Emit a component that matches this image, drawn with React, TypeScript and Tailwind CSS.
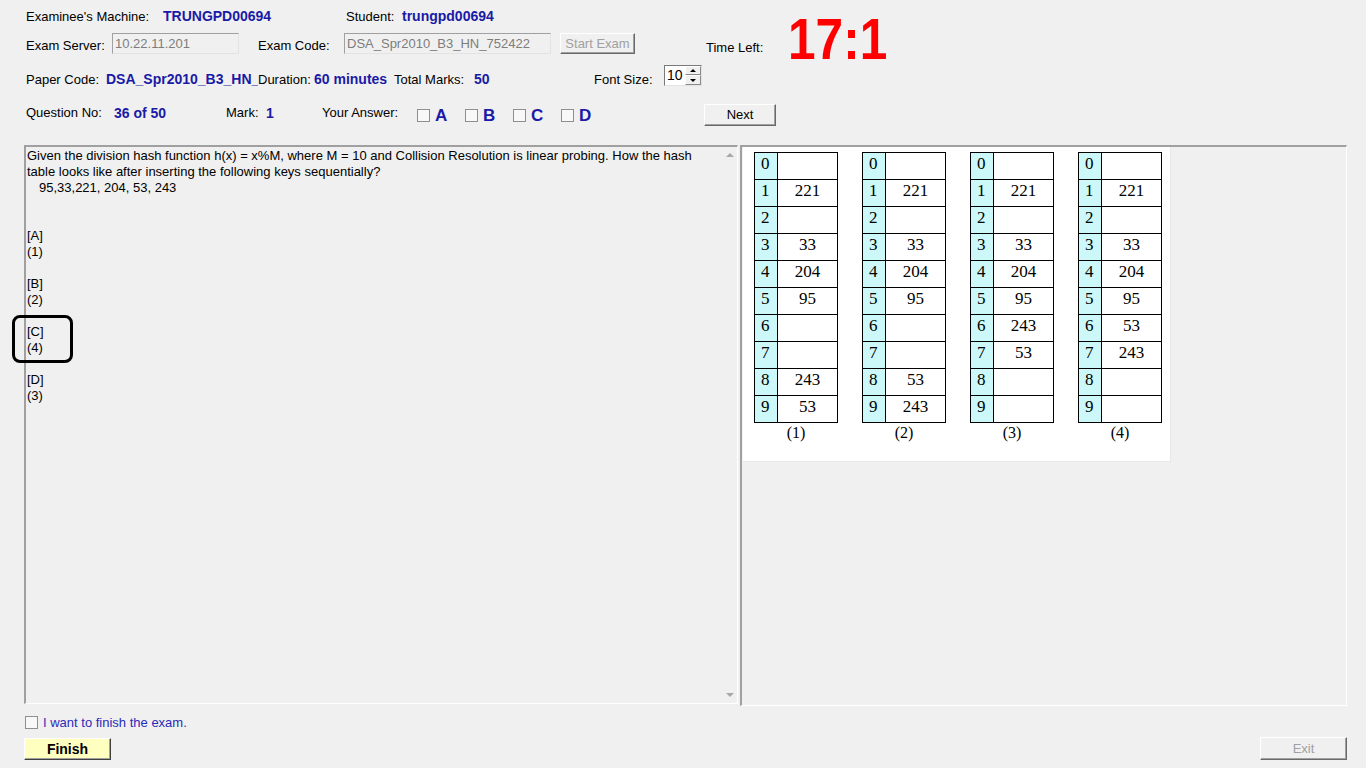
import React from "react";

const sans = "font-['Liberation_Sans',Arial,sans-serif]";
const serif = "font-['Liberation_Serif','Times_New_Roman',serif]";

const tables: { label: string; vals: string[] }[] = [
  { label: "(1)", vals: ["", "221", "", "33", "204", "95", "", "", "243", "53"] },
  { label: "(2)", vals: ["", "221", "", "33", "204", "95", "", "", "53", "243"] },
  { label: "(3)", vals: ["", "221", "", "33", "204", "95", "243", "53", "", ""] },
  { label: "(4)", vals: ["", "221", "", "33", "204", "95", "53", "243", "", ""] },
];

function HashTable({ label, vals }: { label: string; vals: string[] }) {
  return (
    <div className="flex w-[84px] shrink-0 flex-col items-center">
      <div className="w-[84px] border border-black bg-white">
        {vals.map((v, i) => (
          <div
            key={i}
            className={i < 9 ? "flex h-[27px] border-b border-black" : "flex h-[26px]"}
          >
            <div className="w-[23px] shrink-0 border-r border-black bg-[#ccf8fa] pl-[6px] text-[17px] leading-[21px] text-black">
              {i}
            </div>
            <div className="flex-1 text-center text-[17px] leading-[21px] text-black">{v}</div>
          </div>
        ))}
      </div>
      <div className="text-[16px] leading-[20px] text-black">{label}</div>
    </div>
  );
}

function Box() {
  return <span className="block h-[13px] w-[13px] shrink-0 border border-[#8f8f8f] bg-[#f8f8f8]" />;
}

function Letter({ l }: { l: string }) {
  return (
    <div className="flex w-[48px] shrink-0 items-start">
      <span className="mt-[5px]">
        <Box />
      </span>
      <span className="ml-[5px] mt-[2px] text-[17px] font-bold leading-[20px] text-[#1a1aa6]">{l}</span>
    </div>
  );
}

export default function App() {
  const lbl = "shrink-0 text-[13px] leading-[15px] text-black whitespace-nowrap";
  const val = "shrink-0 text-[14px] font-bold leading-[16px] text-[#1a1aa6] whitespace-nowrap";
  const btn =
    "flex items-center justify-center border border-t-white border-l-white border-r-[#696969] border-b-[#696969] bg-[#f0f0f0] shadow-[inset_-1px_-1px_0_#a0a0a0] text-[13px]";
  const input =
    "flex items-center border border-t-[#a0a0a0] border-l-[#a0a0a0] border-r-[#e3e3e3] border-b-[#e3e3e3] bg-[#f0f0f0] pl-[2px] text-[13px] text-[#7d7d7d] whitespace-nowrap overflow-hidden";

  const lines: { t: string; cls?: string }[] = [
    { t: "Given the division hash function h(x) = x%M, where M = 10 and Collision Resolution is linear probing. How the hash" },
    { t: "table looks like after inserting the following keys sequentially?" },
    { t: "95,33,221, 204, 53, 243", cls: "pl-[12px]" },
    { t: "" },
    { t: "" },
    { t: "[A]" },
    { t: "(1)" },
    { t: "" },
    { t: "[B]" },
    { t: "(2)" },
    { t: "" },
    { t: "[C]" },
    { t: "(4)" },
    { t: "" },
    { t: "[D]" },
    { t: "(3)" },
  ];

  return (
    <div className={`relative h-[768px] w-[1366px] overflow-hidden bg-[#f0f0f0] ${sans}`}>
      {/* Header */}
      <div className="pl-[26px]">
        <div className="flex h-[65px] items-start">
          <div className="w-[680px] shrink-0">
            <div className="mt-[6px] flex h-[20px] items-center">
              <span className={`${lbl} w-[137px]`}>Examinee's Machine:</span>
              <span className={`${val} w-[183px]`}>TRUNGPD00694</span>
              <span className={`${lbl} w-[56px]`}>Student:</span>
              <span className={val}>trungpd00694</span>
            </div>
            <div className="mt-[7px] flex h-[21px] items-end">
              <span className={`${lbl} w-[86px] pb-[1px]`}>Exam Server:</span>
              <div className={`${input} h-[21px] w-[127px]`}>10.22.11.201</div>
              <span className={`${lbl} ml-[19px] w-[86px] pb-[1px]`}>Exam Code:</span>
              <div className={`${input} h-[21px] w-[207px]`}>DSA_Spr2010_B3_HN_752422</div>
              <div className={`${btn} ml-[9px] h-[21px] w-[75px] text-[12px] text-[#a0a0a0]`}>Start Exam</div>
            </div>
          </div>
          <span className={`${lbl} mt-[40px] w-[82px]`}>Time Left:</span>
          <span className="mt-[11px] origin-left scale-x-[0.87] text-[57px] font-bold leading-none text-[#ff0000]">17:1</span>
        </div>

        <div className="flex h-[22px] items-end">
          <span className={`${lbl} w-[80px]`}>Paper Code:</span>
          <span className={`${val} w-[152px] overflow-hidden`}>DSA_Spr2010_B3_HN_</span>
          <span className={`${lbl} w-[56px]`}>Duration:</span>
          <span className={`${val} w-[80px]`}>60 minutes</span>
          <span className={`${lbl} w-[80px]`}>Total Marks:</span>
          <span className={`${val} w-[120px]`}>50</span>
          <span className={`${lbl} w-[70px]`}>Font Size:</span>
          <div className="mb-[1px] flex h-[21px] w-[38px] border border-t-[#7a7a7a] border-l-[#7a7a7a] border-r-[#e3e3e3] border-b-[#e3e3e3] bg-white">
            <span className="pl-[2px] text-[14px] leading-[19px] text-black">10</span>
            <div className="ml-auto flex w-[16px] flex-col">
              <div className="flex h-[9px] items-center justify-center border border-t-white border-l-white border-r-[#8a8a8a] border-b-[#8a8a8a] bg-[#f0f0f0]">
                <span className="h-0 w-0 border-x-[3px] border-b-[3px] border-x-transparent border-b-black" />
              </div>
              <div className="flex h-[10px] items-center justify-center border border-t-white border-l-white border-r-[#8a8a8a] border-b-[#8a8a8a] bg-[#f0f0f0]">
                <span className="h-0 w-0 border-x-[3px] border-t-[3px] border-x-transparent border-t-black" />
              </div>
            </div>
          </div>
        </div>

        <div className="mt-[17px] flex h-[22px] items-start">
          <span className={`${lbl} w-[88px] pt-[1px]`}>Question No:</span>
          <span className={`${val} w-[112px] pt-[1px]`}>36 of 50</span>
          <span className={`${lbl} w-[40px] pt-[1px]`}>Mark:</span>
          <span className={`${val} w-[56px] pt-[1px]`}>1</span>
          <span className={`${lbl} w-[95px] pt-[1px]`}>Your Answer:</span>
          <Letter l="A" />
          <Letter l="B" />
          <Letter l="C" />
          <Letter l="D" />
          <div className={`${btn} ml-[95px] h-[22px] w-[72px] text-black`}>Next</div>
        </div>
      </div>

      {/* Main panels */}
      <div className="mt-[19px] flex h-[561px] pl-[24px]">
        <div className="flex h-[559px] w-[714px] shrink-0 border-t-2 border-l-2 border-b border-r border-t-[#a0a0a0] border-l-[#a0a0a0] border-b-white border-r-white">
          <div className="flex-1 pl-[1px] pt-[1px] text-[13px] text-black">
            {lines.map((ln, i) => (
              <div key={i} className={`h-[16px] whitespace-nowrap leading-[16px] ${ln.cls ?? ""}`}>
                {ln.t}
              </div>
            ))}
          </div>
          <div className="flex w-[16px] shrink-0 flex-col items-center justify-between py-[6px] pl-[1px]">
            <span className="h-0 w-0 border-x-[4px] border-b-[4px] border-x-transparent border-b-[#a8a8a8]" />
            <span className="h-0 w-0 border-x-[4px] border-t-[4px] border-x-transparent border-t-[#a8a8a8]" />
          </div>
        </div>

        <div className="ml-[2px] h-[561px] w-[607px] shrink-0 border-t-2 border-l-2 border-b border-r border-t-[#a0a0a0] border-l-[#a0a0a0] border-b-white border-r-white">
          <div className={`ml-[1px] flex h-[315px] w-[428px] gap-[24px] border-r border-b border-[#e8e8e8] bg-white pl-[11px] pt-[5px] ${serif}`}>
            {tables.map((t) => (
              <HashTable key={t.label} label={t.label} vals={t.vals} />
            ))}
          </div>
        </div>
      </div>

      {/* Bottom */}
      <div className="mt-[10px] flex h-[13px] items-center pl-[25px]">
        <Box />
        <span className="ml-[5px] text-[13px] leading-[15px] text-[#2b2bb8]">I want to finish the exam.</span>
      </div>
      <div className="mt-[9px] flex items-start justify-between pl-[24px] pr-[19px]">
        <div className="flex h-[22px] w-[87px] items-center justify-center border border-t-white border-l-white border-r-[#404040] border-b-[#404040] bg-[#ffffc0] shadow-[inset_-1px_-1px_0_#a0a0a0] text-[14px] font-bold text-black">
          Finish
        </div>
        <div className={`${btn} -mt-[1px] h-[23px] w-[87px] text-[#a0a0a0]`}>Exit</div>
      </div>

      {/* Annotation */}
      <div className="absolute left-[12px] top-[315px] h-[48px] w-[61px] rounded-[8px] border-[3px] border-black" />
    </div>
  );
}
